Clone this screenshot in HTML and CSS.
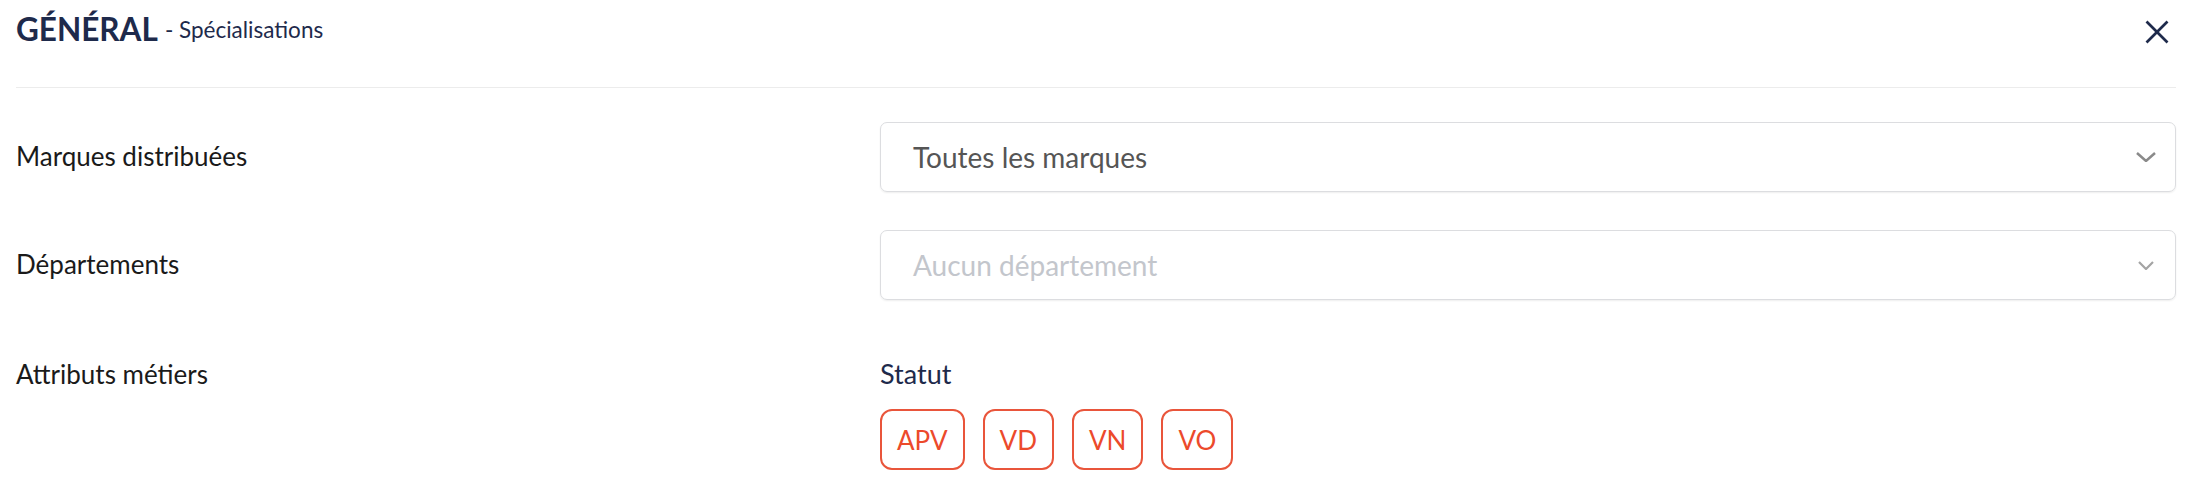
FILE: index.html
```html
<!DOCTYPE html>
<html lang="fr">
<head>
  <meta charset="UTF-8">
  <title>Général - Spécialisations</title>
  <link rel="stylesheet" href="styles.css">
</head>
<body>
  <div class="panel">
    <div class="panel-header">
      <h1 class="title">GÉNÉRAL <span class="subtitle">- Spécialisations</span></h1>
      <button class="close" aria-label="Fermer">
        <svg width="24" height="24" viewBox="0 0 24 24">
          <line x1="1.5" y1="1.5" x2="22.5" y2="22.5" />
          <line x1="22.5" y1="1.5" x2="1.5" y2="22.5" />
        </svg>
      </button>
    </div>

    <div class="form">
      <div class="row">
        <div class="label">Marques distribuées</div>
        <div class="select">
          <span class="value">Toutes les marques</span>
          <svg class="chevron" width="20" height="10" viewBox="0 0 20 10">
            <polyline points="1,1 10,9 19,1" />
          </svg>
        </div>
      </div>

      <div class="row">
        <div class="label">Départements</div>
        <div class="select">
          <span class="value placeholder">Aucun département</span>
          <svg class="chevron small" width="16" height="9" viewBox="0 0 16 9">
            <polyline points="1,1 8,8 15,1" />
          </svg>
        </div>
      </div>

      <div class="row top">
        <div class="label">Attributs métiers</div>
        <div class="attributes">
          <div class="group-name">Statut</div>
          <div class="chips">
            <span class="chip">APV</span>
            <span class="chip">VD</span>
            <span class="chip">VN</span>
            <span class="chip">VO</span>
          </div>
        </div>
      </div>
    </div>
  </div>
</body>
</html>
```

FILE: styles.css
```css
body {
  margin: 0;
  background: #fff;
  font-family: Lato, "Open Sans", sans-serif;
  color: #1a1a1a;
}

.panel {
  padding: 0 17px 0 16px;
}

.panel-header {
  display: flex;
  justify-content: space-between;
  align-items: flex-start;
  height: 88px;
  padding-top: 11px;
  box-sizing: border-box;
  border-bottom: 1px solid #ececec;
}

.title {
  margin: 0;
  display: flex;
  align-items: center;
  gap: 7px;
  font-size: 31.5px;
  line-height: 1.2;
  font-weight: 700;
  color: #1e2a4b;
}

.subtitle {
  font-size: 22.5px;
  font-weight: 400;
}

.close {
  border: none;
  background: none;
  padding: 0;
  margin: 9px 7px 0 0;
  cursor: pointer;
  display: flex;
}

.close line {
  stroke: #1e2a4b;
  stroke-width: 2.6;
}

.form {
  padding-top: 34px;
  display: flex;
  flex-direction: column;
  gap: 38px;
}

.row {
  display: grid;
  grid-template-columns: 40% 60%;
  align-items: center;
}

.row.top {
  align-items: start;
}

.label {
  font-size: 26px;
  line-height: 1.2;
}

.row.top .label {
  margin-top: 21px;
}

.select {
  height: 70px;
  box-sizing: border-box;
  border: 1px solid #dcdde0;
  border-radius: 7px;
  box-shadow: 0 1px 2px rgba(0, 0, 0, 0.07);
  display: flex;
  align-items: center;
  justify-content: space-between;
  padding: 0 19px 0 32px;
}

.value {
  font-size: 28px;
  color: #555;
}

.value.placeholder {
  color: #c3c6cc;
}

.chevron polyline {
  fill: none;
  stroke: #8a8a8a;
  stroke-width: 2.5;
}

.chevron.small {
  margin-right: 2px;
}

.chevron.small polyline {
  stroke: #a4a4a4;
  stroke-width: 2.2;
}

.group-name {
  font-size: 27px;
  line-height: 1.2;
  color: #1e2a4b;
  margin-top: 20px;
}

.chips {
  display: flex;
  gap: 18px;
  margin-top: 19px;
}

.chip {
  box-sizing: border-box;
  height: 61px;
  min-width: 71px;
  padding: 0 15px;
  display: flex;
  align-items: center;
  justify-content: center;
  border: 2px solid #e9553b;
  border-radius: 12px;
  color: #ec4a2b;
  font-size: 26px;
}
```
